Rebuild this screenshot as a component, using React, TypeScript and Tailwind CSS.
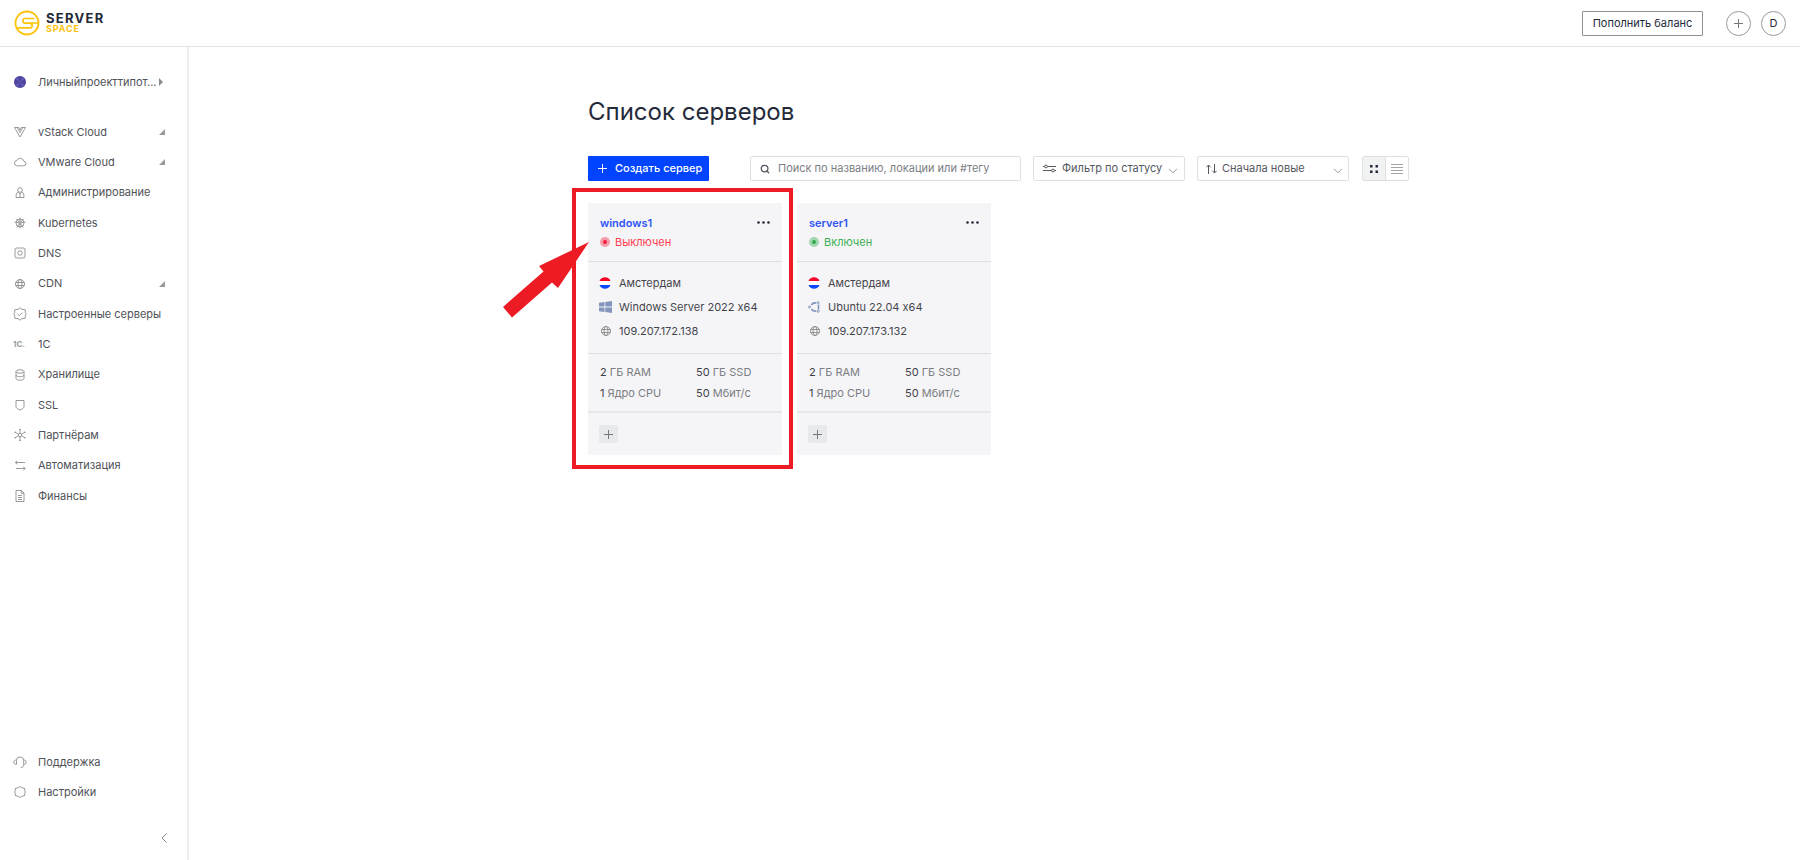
import { useState } from 'react'
import type { ReactNode } from 'react'
import { Search } from 'lucide-react'

// ── Icons ─────────────────────────────────────────────────
const icons: Record<string, ReactNode> = {
  vstack: <path d="M1.500 2.500h2.700L7 7.500l2.800-5h2.700L7 12zM4.200 2.500h1.600L7 5l1.200-2.500h1.600" />,
  cloud: <path d="M3.600 10.800h6.900a2.300 2.300 0 0 0 .3-4.600 3.700 3.700 0 0 0-7-.7 2.700 2.700 0 0 0-.2 5.300z" />,
  admin: (
    <>
      <circle cx="7" cy="4" r="2.300" />
      <path d="M5.200 5.800C3.500 6.800 3 8.800 3 11.500h8c0-2.700-.5-4.700-2.200-5.700M5.300 6.300L7 8l1.700-1.700M7 8v3.500" />
    </>
  ),
  kubernetes: (
    <>
      <circle cx="7" cy="7" r="4" />
      <circle cx="7" cy="7" r="1" />
      <path d="M7 1.500V6M7 8v4.500M1.500 5.800L6 6.800M8 6.800l4.500-1M3.400 2.800l3 3.400M10.600 2.800l-3 3.400M3.800 11.500l2.600-3.700M10.200 11.500L7.600 7.800" />
    </>
  ),
  dns: (
    <>
      <rect x="2" y="2" width="10" height="10" rx="1.500" />
      <circle cx="7" cy="7" r="2.200" />
      <path d="M3.800 3.800h.4M9.800 3.800h.4M3.800 10.200h.4M9.800 10.200h.4" />
    </>
  ),
  globe: (
    <>
      <circle cx="7" cy="7" r="4.500" />
      <ellipse cx="7" cy="7" rx="2" ry="4.500" />
      <path d="M2.500 5.500h9M2.500 8.500h9" />
    </>
  ),
  configured: (
    <>
      <path d="M7 .8l2 1.600 3.200.3.100 2.700L13.200 7l-.9 1.600-.1 2.700-3.200.3-2 1.600-2-1.600-3.200-.3-.1-2.700L.8 7l.9-1.600.1-2.700L5 2.400z" />
      <path d="M4.700 7l1.700 1.600 3-3" />
    </>
  ),
  storage: (
    <>
      <ellipse cx="7" cy="3.500" rx="4" ry="1.700" />
      <path d="M3 3.500v7c0 1 1.800 1.700 4 1.700s4-.7 4-1.700v-7M3 7c0 1 1.800 1.700 4 1.700s4-.7 4-1.700" />
    </>
  ),
  shield: <path d="M3 2.500h8v5.800c0 1.700-1.700 2.800-4 3.700-2.300-.9-4-2-4-3.700z" />,
  partners: (
    <>
      <circle cx="7" cy="7" r="1.700" />
      <path d="M7 1.500v3.800M7 8.700v3.800M2 4.200l3.500 2M8.500 7.800l3.500 2M2 9.800l3.500-2M8.500 6.200l3.500-2" />
      <path d="M6.200 1.500h1.600M6.200 12.500h1.600M1.600 4.800l.8-1.300M12.400 4.800l-.8-1.300M1.600 9.200l.8 1.300M12.400 9.200l-.8 1.300" />
    </>
  ),
  automation: <path d="M4.300 1.700l-2 1.800 2 1.800M2.300 3.500H12M10.200 7.700l2 1.800-2 1.800M12.200 9.500H3" />,
  finance: (
    <>
      <path d="M3 1.500h5.500L11 4v8.500H3zM8.300 1.500v2.800H11" />
      <path d="M5 6.500h4M5 8.500h4M5 10.500h4" />
    </>
  ),
  support: (
    <>
      <path d="M3.500 9.400V5.500a3.600 3.600 0 0 1 7.200 0v3.900c0 2-1 3.200-3 3.400" />
      <path d="M3.500 5C1.900 5 .8 5.800.8 7.200s1.100 2.200 2.700 2.200M10.700 5c1.600 0 2.500.8 2.500 2.200s-.9 2.200-2.500 2.200" />
    </>
  ),
  settings: <path d="M7 1.500l1.700 1.200 3 .7v2.500l.8 1.100-.8 1.100v2.500l-3 .7L7 12.500l-1.700-1.200-3-.7V8.100L1.500 7l.8-1.100V3.400l3-.7z" />,
}

function Icon({ name }: { name: string }) {
  if (name === '1c') {
    return <span className="flex w-4 shrink-0 text-[8px] font-bold text-[#999]" aria-hidden="true">1С.</span>
  }
  return (
    <svg viewBox="0 0 14 14" className="size-[14px] shrink-0 fill-none stroke-[#808080]" strokeWidth="0.8" aria-hidden="true">
      {icons[name]}
    </svg>
  )
}

function Plus() {
  return (
    <svg viewBox="0 0 9 9" className="size-[9px] shrink-0" stroke="currentColor" fill="none" aria-hidden="true">
      <path d="M4.500 0v9M0 4.500h9" />
    </svg>
  )
}

function Chevron() {
  return (
    <svg viewBox="0 0 10 6" className="mt-1 h-[6px] w-[10px] shrink-0" fill="none" stroke="#999" aria-hidden="true">
      <path d="M1 .8l4 4 4-4" />
    </svg>
  )
}

function Logo() {
  return (
    <a href="#" className="flex items-center gap-[6px]">
      <svg viewBox="0 0 26 26" className="size-[26px]" fill="none" stroke="#fdc30b" aria-hidden="true">
        <circle cx="13" cy="13" r="11.500" strokeWidth="1.800" />
        <path d="M20.500 8.500h-9.300a2.300 2.300 0 0 0 0 4.600h4.600a2.300 2.300 0 0 1 0 4.700H2.800M24 13h-7.500" strokeWidth="1.700" />
      </svg>
      <span className="flex flex-col font-bold">
        <span className="text-[13px] leading-3 tracking-widest text-[#242a3a]">SERVER</span>
        <span className="text-[9px] leading-[10px] tracking-widest text-[#fdc30b]">SPACE</span>
      </span>
    </a>
  )
}

// ── Sidebar links ─────────────────────────────────────────
type NavItem = { label: string; icon: string; nested?: boolean }

const mainLinks: NavItem[] = [
  { label: 'vStack Cloud', icon: 'vstack', nested: true },
  { label: 'VMware Cloud', icon: 'cloud', nested: true },
  { label: 'Администрирование', icon: 'admin' },
  { label: 'Kubernetes', icon: 'kubernetes' },
  { label: 'DNS', icon: 'dns' },
  { label: 'CDN', icon: 'globe', nested: true },
  { label: 'Настроенные серверы', icon: 'configured' },
  { label: '1C', icon: '1c' },
  { label: 'Хранилище', icon: 'storage' },
  { label: 'SSL', icon: 'shield' },
  { label: 'Партнёрам', icon: 'partners' },
  { label: 'Автоматизация', icon: 'automation' },
  { label: 'Финансы', icon: 'finance' },
]

const bottomLinks: NavItem[] = [
  { label: 'Поддержка', icon: 'support' },
  { label: 'Настройки', icon: 'settings' },
]

function NavLink({ item }: { item: NavItem }) {
  return (
    <li>
      <a href="#" className="flex h-[30px] items-center pr-[22px] pl-[13px] hover:text-[#0044ff]">
        <span className="flex w-[25px] shrink-0">
          <Icon name={item.icon} />
        </span>
        <span className="flex-1 whitespace-nowrap">{item.label}</span>
        {item.nested && (
          <svg viewBox="0 0 6 6" className="size-[6px]" fill="#999" aria-hidden="true">
            <path d="M6 0v6H0z" />
          </svg>
        )}
      </a>
    </li>
  )
}

function Sidebar() {
  return (
    <aside className="flex w-[189px] shrink-0 flex-col border-r-2 border-[#efefef] text-[11px] text-[#4f5258]">
      <button className="mt-[25px] flex h-5 items-center pr-6 pl-[14px]">
        <svg viewBox="0 0 12 12" className="mr-3 size-3 shrink-0" aria-hidden="true">
          <circle cx="6" cy="6" r="6" fill="#4d449f" />
          <path d="M6 6L1 2.700 3.500.6zM6 6l2.500-5.400L11 2.700zM6 6l5 3.300-2.500 2.100zM6 6l-2.500 5.400L1 9.300z" fill="#6259b5" />
        </svg>
        <span className="flex-1 text-left whitespace-nowrap">Личныйпроекттипот...</span>
        <svg viewBox="0 0 4 8" className="h-2 w-1" fill="#8b8b8b" aria-hidden="true">
          <path d="M0 0l4 4-4 4z" />
        </svg>
      </button>
      <nav className="mt-[25px] flex flex-1 flex-col justify-between">
        <ul className="flex min-h-[394px] flex-col justify-between">
          {mainLinks.map(item => (
            <NavLink key={item.label} item={item} />
          ))}
        </ul>
        <ul>
          {bottomLinks.map(item => (
            <NavLink key={item.label} item={item} />
          ))}
        </ul>
      </nav>
      <button className="mt-6 mr-5 mb-[15px] self-end" aria-label="Свернуть меню">
        <svg viewBox="0 0 6 14" className="h-[14px] w-[6px]" fill="none" stroke="#8b8b8b" aria-hidden="true">
          <path d="M5.500 2.500L1 7l4.500 4.500" />
        </svg>
      </button>
    </aside>
  )
}

function Header() {
  return (
    <header className="flex h-[47px] shrink-0 items-center border-b border-[#e2e2e2] px-[14px]">
      <Logo />
      <button className="ml-auto h-[25px] w-[121px] rounded-[1px] border border-[#8f9298] text-[11px] whitespace-nowrap text-[#242a3a]">
        Пополнить баланс
      </button>
      <button className="ml-[23px] flex size-[25px] items-center justify-center rounded-full border border-[#9a9a9a] text-[#777]" aria-label="Добавить">
        <Plus />
      </button>
      <button className="ml-[10px] flex size-[25px] items-center justify-center rounded-full border border-[#9a9a9a] text-[11px] text-[#242a3a]">
        D
      </button>
    </header>
  )
}

// ── Servers ───────────────────────────────────────────────
type Server = {
  name: string
  running: boolean
  os: string
  osIcon: 'windows' | 'ubuntu'
  ip: string
  highlighted?: boolean
}

const servers: Server[] = [
  { name: 'windows1', running: false, os: 'Windows Server 2022 x64', osIcon: 'windows', ip: '109.207.172.138', highlighted: true },
  { name: 'server1', running: true, os: 'Ubuntu 22.04 x64', osIcon: 'ubuntu', ip: '109.207.173.132' },
]

const specs = [
  { value: '2', unit: 'ГБ RAM' },
  { value: '50', unit: 'ГБ SSD' },
  { value: '1', unit: 'Ядро CPU' },
  { value: '50', unit: 'Мбит/с' },
]

function FlagIcon() {
  return (
    <svg viewBox="0 0 12 12" className="size-3" aria-hidden="true">
      <path d="M.5 4a5.900 5.900 0 0 1 11 0z" fill="#f5062c" />
      <path d="M.4 4h11.200v4H.4z" fill="#fff" />
      <path d="M.5 8a5.900 5.900 0 0 0 11 0z" fill="#0a45ff" />
    </svg>
  )
}

function OsIcon({ name }: { name: Server['osIcon'] }) {
  if (name === 'windows') {
    return (
      <svg viewBox="0 0 13 12" className="h-3 w-[13px]" fill="#8195bd" aria-hidden="true">
        <path d="M0 1.700L5.500 1v4.600H0zM6.300.900L13 0v5.600H6.300zM0 6.400h5.500V11L0 10.300zM6.300 6.400H13V12l-6.700-.9z" />
      </svg>
    )
  }
  return (
    <svg viewBox="0 0 12 12" className="size-3" fill="none" stroke="#8195bd" aria-hidden="true">
      <path d="M3.400 4A4.200 4.200 0 0 1 8.300 2.200M10.500 3.500v5M3.400 8a4.200 4.200 0 0 0 4.900 1.800" strokeWidth="1.600" />
      <circle cx="1.500" cy="6" r="1" />
      <circle cx="10.200" cy="1.700" r="1" />
      <circle cx="10.200" cy="10.300" r="1" />
    </svg>
  )
}

// Red frame and arrow that point at a card
function Highlight() {
  return (
    <div className="pointer-events-none absolute -top-[15px] -right-[11px] -bottom-[14px] -left-4 border-4 border-[#ed1c24]">
      <svg viewBox="0 0 86 76" className="absolute top-[50px] -left-[73px] h-[76px] w-[86px]" fill="#ed1c24" aria-hidden="true">
        <path d="M86 0L36 24l4.500 5.500L0 65l9 10.500 40-35 6 5.500z" />
      </svg>
    </div>
  )
}

function ServerCard({ server }: { server: Server }) {
  return (
    <article className="relative w-[194px] rounded-[2px] bg-[#f5f5f7] text-[11px] leading-4 text-[#45464d]">
      <div className="flex flex-col gap-[3px] border-b border-[#dedfe2] px-3 pt-3 pb-[11px]">
        <div className="flex items-center justify-between">
          <a href="#" className="font-semibold text-[#2f54f5]">{server.name}</a>
          <button className="text-[#242a3a]" aria-label="Действия">
            <svg viewBox="0 0 13 3" className="mb-[2px] h-[3px] w-[13px]" fill="currentColor" aria-hidden="true">
              <circle cx="1.500" cy="1.500" r="1.300" />
              <circle cx="6.500" cy="1.500" r="1.300" />
              <circle cx="11.500" cy="1.500" r="1.300" />
            </svg>
          </button>
        </div>
        <p className={`flex items-center gap-[5px] ${server.running ? 'text-[#3cb054]' : 'text-[#ff3d4f]'}`}>
          <svg viewBox="0 0 10 10" className="size-[10px]" fill={server.running ? '#28a745' : '#f5183a'} aria-hidden="true">
            <circle cx="5" cy="5" r="5" opacity="0.4" />
            <circle cx="5" cy="5" r="1.900" />
          </svg>
          {server.running ? 'Включен' : 'Выключен'}
        </p>
      </div>
      <ul className="flex flex-col gap-2 border-b border-[#dedfe2] px-[11px] pt-[13px] pb-[14px]">
        <li className="flex items-center">
          <span className="w-5"><FlagIcon /></span>
          Амстердам
        </li>
        <li className="flex items-center">
          <span className="w-5"><OsIcon name={server.osIcon} /></span>
          {server.os}
        </li>
        <li className="flex items-center">
          <span className="w-5"><Icon name="globe" /></span>
          {server.ip}
        </li>
      </ul>
      <ul className="grid grid-cols-[96px_1fr] gap-y-[5px] border-b-2 border-[#e8e8eb] px-3 py-[10px] text-[#7b7d83]">
        {specs.map(spec => (
          <li key={spec.unit}>
            <span className="text-[#3d3f48]">{spec.value}</span> {spec.unit}
          </li>
        ))}
      </ul>
      <div className="px-[11px] py-3">
        <button className="flex h-[18px] w-[19px] items-center justify-center rounded-[2px] bg-[#e8e9ec] text-[#777]" aria-label="Добавить тег">
          <Plus />
        </button>
      </div>
      {server.highlighted && <Highlight />}
    </article>
  )
}

// ── Toolbar ───────────────────────────────────────────────
function Toolbar() {
  const [query, setQuery] = useState('')
  const [view, setView] = useState<'grid' | 'list'>('grid')

  return (
    <div className="flex h-[25px] text-[11px] text-[#55585f]">
      <button className="flex w-[121px] shrink-0 items-center gap-2 rounded-[1px] bg-[#0044ff] pl-[10px] font-medium whitespace-nowrap text-white">
        <Plus />
        Создать сервер
      </button>
      <label className="ml-[41px] flex min-w-0 flex-1 items-center gap-2 rounded-[2px] border border-[#dfe1e1] px-[9px]">
        <Search size={10} strokeWidth={3} className="shrink-0 text-[#55585f]" />
        <input
          type="text"
          aria-label="Поиск"
          placeholder="Поиск по названию, локации или #тегу"
          value={query}
          onChange={e => setQuery(e.target.value)}
          className="w-full bg-transparent outline-none placeholder:text-[#7b7e84]"
        />
      </label>
      <label className="ml-3 flex w-[152px] items-center rounded-[2px] border border-[#dfe1e1] pr-[6px] pl-[9px]">
        <svg viewBox="0 0 13 9" className="h-[9px] w-[13px] shrink-0" fill="none" stroke="#55585f" aria-hidden="true">
          <path d="M0 2.500h1.500M4.500 2.500H13M0 6.500h8.500M11.500 6.500H13" />
          <circle cx="3" cy="2.500" r="1.400" />
          <circle cx="10" cy="6.500" r="1.400" />
        </svg>
        <select aria-label="Статус" className="ml-[6px] min-w-0 flex-1 appearance-none bg-transparent outline-none">
          <option>Фильтр по статусу</option>
        </select>
        <Chevron />
      </label>
      <label className="ml-3 flex w-[152px] items-center rounded-[2px] border border-[#dfe1e1] pr-[5px] pl-2">
        <svg viewBox="0 0 11 10" className="h-[10px] w-[11px] shrink-0" fill="none" stroke="#55585f" aria-hidden="true">
          <path d="M2.500 10V1M.3 3.300L2.500 1l2.200 2.300M8.500 0v9M6.300 6.700L8.500 9l2.200-2.300" />
        </svg>
        <select aria-label="Сортировка" className="ml-[5px] min-w-0 flex-1 appearance-none bg-transparent outline-none">
          <option>Сначала новые</option>
        </select>
        <Chevron />
      </label>
      <div className="ml-[13px] flex w-[47px] rounded-[2px] border border-[#dfe1e1]">
        <button
          aria-label="Плитка"
          onClick={() => setView('grid')}
          className={`flex flex-1 items-center justify-center border-r border-[#dfe1e1] ${view === 'grid' ? 'bg-[#f1f3f3]' : ''}`}
        >
          <svg viewBox="0 0 8 8" className="size-2" fill="#242a3a" aria-hidden="true">
            <path d="M0 0h2.500v2.500H0zM5.500 0H8v2.500H5.500zM0 5.500h2.500V8H0zM5.500 5.500H8V8H5.500z" />
          </svg>
        </button>
        <button
          aria-label="Список"
          onClick={() => setView('list')}
          className={`flex flex-1 items-center justify-center ${view === 'list' ? 'bg-[#f1f3f3]' : ''}`}
        >
          <svg viewBox="0 0 12 10" className="h-[10px] w-3" stroke="#a3a3a3" aria-hidden="true">
            <path d="M0 .5h12M0 3.500h12M0 6.500h12M0 9.500h12" />
          </svg>
        </button>
      </div>
    </div>
  )
}

export default function App() {
  return (
    <div className="flex min-h-screen flex-col bg-white font-['Inter','Noto_Sans',sans-serif] [font-feature-settings:'calt'_0]">
      <Header />
      <div className="flex flex-1">
        <Sidebar />
        <main className="min-w-0 flex-1 pt-[49px] pl-2">
          <div className="mx-auto max-w-[821px]">
            <h1 className="mb-7 text-2xl leading-8 text-[#242a3a]">Список серверов</h1>
            <Toolbar />
            <div className="mt-[22px] flex flex-wrap gap-[15px]">
              {servers.map(server => (
                <ServerCard key={server.name} server={server} />
              ))}
            </div>
          </div>
        </main>
      </div>
    </div>
  )
}
